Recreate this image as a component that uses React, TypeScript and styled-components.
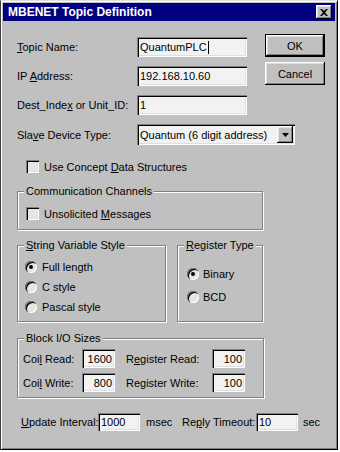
import React from "react";
import styled, { createGlobalStyle } from "styled-components";

const Global = createGlobalStyle`
  html, body { margin: 0; padding: 0; background: #ffffff; }
  body {
    font-family: "Liberation Sans", Arial, sans-serif;
    font-size: 11px;
    color: #000;
  }
  * { box-sizing: border-box; }
`;

const raised = `
  box-shadow: inset -1px -1px #000, inset 1px 1px #fff, inset -2px -2px #808080, inset 2px 2px #dfdfdf;
`;
const sunken = `
  box-shadow: inset 1px 1px #808080, inset 2px 2px #000, inset -1px -1px #fff, inset -2px -2px #dfdfdf;
`;

const Window = styled.div`
  width: 338px;
  height: 450px;
  background: #c0c0c0;
  border: 1px solid;
  border-color: #dfdfdf #000 #000 #404040;
  box-shadow: inset 1px 1px #fff, inset -1px -1px #808080;
  padding: 2px;
  display: flex;
  flex-direction: column;
`;

const TitleBar = styled.div`
  height: 18px;
  background: #000080;
  display: flex;
  align-items: center;
  justify-content: space-between;
  padding: 0 3px 0 5px;
`;

const Title = styled.span`
  font-weight: bold;
  font-size: 12px;
  color: #fff;
`;

const CloseBtn = styled.div`
  width: 16px;
  height: 14px;
  background: #c0c0c0;
  ${raised}
  display: flex;
  align-items: center;
  justify-content: center;
`;

const Body = styled.div`
  padding: 16px 0 0 14px;
  display: flex;
  flex-direction: column;
`;

const FormGrid = styled.div`
  display: grid;
  grid-template-columns: 120px 128px 60px;
  grid-template-rows: 20px 20px 20px 21px;
  row-gap: 9px;
`;

const Label = styled.div`
  align-self: center;
  line-height: 14px;
  white-space: nowrap;
`;

const Field = styled.div<{ $w: number; $h?: number; $right?: boolean }>`
  width: ${(p) => p.$w}px;
  height: ${(p) => p.$h ?? 20}px;
  background: #f2f2f2;
  ${sunken}
  display: flex;
  align-items: center;
  justify-content: ${(p) => (p.$right ? "flex-end" : "flex-start")};
  padding: 0 3px;
  white-space: nowrap;
  flex: none;
`;

const Caret = styled.span`
  display: inline-block;
  width: 1px;
  height: 13px;
  background: #000;
  margin-left: 1px;
`;

const Button = styled.div<{ $default?: boolean }>`
  width: 60px;
  height: 23px;
  align-self: end;
  background: #c0c0c0;
  display: flex;
  align-items: center;
  justify-content: center;
  box-shadow: inset -1px -1px #000, inset 1px 1px #fff, inset -2px -2px #808080, inset 2px 2px #dfdfdf;
  ${(p) => (p.$default ? `border: 1px solid #000;` : `margin-bottom: 1px;`)}
`;

const Combo = styled.div`
  grid-column: 2 / span 2;
  width: 158px;
  height: 21px;
  background: #f2f2f2;
  ${sunken}
  display: flex;
  align-items: center;
  justify-content: space-between;
  padding: 2px 2px 2px 3px;
  white-space: nowrap;
`;

const DropBtn = styled.div`
  width: 16px;
  height: 17px;
  background: #c0c0c0;
  ${raised}
  display: flex;
  align-items: center;
  justify-content: center;
`;

const CheckRow = styled.div<{ $mt?: number; $ml?: number }>`
  display: flex;
  align-items: center;
  gap: 5px;
  margin-top: ${(p) => p.$mt ?? 0}px;
  margin-left: ${(p) => p.$ml ?? 0}px;
  white-space: nowrap;
`;

const Check = styled.span`
  width: 13px;
  height: 13px;
  background: #e6e6e6;
  ${sunken}
  flex: none;
`;

const Group = styled.div<{ $w: number; $h: number; $mt?: number }>`
  position: relative;
  width: ${(p) => p.$w}px;
  height: ${(p) => p.$h}px;
  margin-top: ${(p) => p.$mt ?? 0}px;
  border: 1px solid #808080;
  box-shadow: inset 1px 1px #fff, 1px 1px #fff;
  flex: none;
`;

const Legend = styled.span`
  position: absolute;
  top: -8px;
  left: 6px;
  background: #c0c0c0;
  padding: 0 2px;
  line-height: 14px;
  white-space: nowrap;
`;

const GroupBody = styled.div<{ $pt: number; $pl: number; $row: number }>`
  display: grid;
  grid-auto-rows: ${(p) => p.$row}px;
  padding: ${(p) => p.$pt}px 0 0 ${(p) => p.$pl}px;
`;

const RadioRow = styled.div<{ $gap: number }>`
  display: flex;
  align-items: center;
  gap: ${(p) => p.$gap}px;
  white-space: nowrap;
`;

const Radio = styled.span<{ $on?: boolean }>`
  width: 12px;
  height: 12px;
  border-radius: 50%;
  background: #e6e6e6;
  box-shadow: inset 1px 1px #808080, inset 2px 2px #000, inset -1px -1px #fff, inset -2px -2px #dfdfdf;
  flex: none;
  display: flex;
  align-items: center;
  justify-content: center;
  &::after {
    content: "";
    width: 4px;
    height: 4px;
    border-radius: 50%;
    background: ${(p) => (p.$on ? "#000" : "transparent")};
  }
`;

const TwoGroups = styled.div`
  display: flex;
  gap: 11px;
  margin-top: 15px;
`;

const SizesGrid = styled.div`
  display: grid;
  grid-template-columns: 59px 33px 97px 33px;
  grid-template-rows: 19px 19px;
  row-gap: 5px;
  padding: 10px 0 0 5px;
`;

const SizeLabel = styled(Label)<{ $pl?: number }>`
  padding-left: ${(p) => p.$pl ?? 0}px;
`;

const BottomRow = styled.div`
  display: flex;
  align-items: center;
  height: 18px;
  margin-top: 15px;
  margin-left: 4px;
`;

const Fixed = styled.div<{ $w?: number; $pl?: number }>`
  ${(p) => (p.$w ? `width: ${p.$w}px;` : "")}
  padding-left: ${(p) => p.$pl ?? 0}px;
  white-space: nowrap;
  flex: none;
`;

export default function App() {
  return (
    <>
      <Global />
      <Window>
        <TitleBar>
          <Title>MBENET Topic Definition</Title>
          <CloseBtn>
            <svg width="8" height="7" viewBox="0 0 8 7">
              <path d="M0 0h2l2 2 2-2h2L5 3.5 8 7H6L4 5 2 7H0l3-3.5z" fill="#000" />
            </svg>
          </CloseBtn>
        </TitleBar>
        <Body>
          <FormGrid>
            <Label>
              <u>T</u>opic Name:
            </Label>
            <Field $w={110}>
              QuantumPLC
              <Caret />
            </Field>
            <Button $default>OK</Button>

            <Label>
              IP <u>A</u>ddress:
            </Label>
            <Field $w={110}>192.168.10.60</Field>
            <Button>Cancel</Button>

            <Label>
              Dest_Inde<u>x</u> or Unit_ID:
            </Label>
            <Field $w={110}>1</Field>
            <div />

            <Label>
              Sla<u>v</u>e Device Type:
            </Label>
            <Combo>
              <span>Quantum (6 digit address)</span>
              <DropBtn>
                <svg width="7" height="4" viewBox="0 0 7 4">
                  <path d="M0 0h7L3.5 4z" fill="#000" />
                </svg>
              </DropBtn>
            </Combo>
          </FormGrid>

          <CheckRow $mt={15} $ml={9}>
            <Check />
            <span>
              Use Concept <u>D</u>ata Structures
            </span>
          </CheckRow>

          <Group $w={246} $h={39} $mt={18}>
            <Legend>Communication Channels</Legend>
            <GroupBody $pt={14} $pl={8} $row={15}>
              <CheckRow>
                <Check />
                <span>
                  Unsolicited <u>M</u>essages
                </span>
              </CheckRow>
            </GroupBody>
          </Group>

          <TwoGroups>
            <Group $w={149} $h={77}>
              <Legend>
                <u>S</u>tring Variable Style
              </Legend>
              <GroupBody $pt={11} $pl={7} $row={20}>
                <RadioRow $gap={5}>
                  <Radio $on />
                  <span>Full length</span>
                </RadioRow>
                <RadioRow $gap={5}>
                  <Radio />
                  <span>C style</span>
                </RadioRow>
                <RadioRow $gap={5}>
                  <Radio />
                  <span>Pascal style</span>
                </RadioRow>
              </GroupBody>
            </Group>
            <Group $w={86} $h={77}>
              <Legend>
                <u>R</u>egister Type
              </Legend>
              <GroupBody $pt={16} $pl={9} $row={23}>
                <RadioRow $gap={4}>
                  <Radio $on />
                  <span>Binary</span>
                </RadioRow>
                <RadioRow $gap={4}>
                  <Radio />
                  <span>BCD</span>
                </RadioRow>
              </GroupBody>
            </Group>
          </TwoGroups>

          <Group $w={247} $h={60} $mt={16}>
            <Legend>Block I/O Sizes</Legend>
            <SizesGrid>
              <SizeLabel>
                Coi<u>l</u> Read:
              </SizeLabel>
              <Field $w={33} $h={19} $right>
                1600
              </Field>
              <SizeLabel $pl={11}>
                R<u>e</u>gister Read:
              </SizeLabel>
              <Field $w={33} $h={19} $right>
                100
              </Field>
              <SizeLabel>
                Coi<u>l</u> Write:
              </SizeLabel>
              <Field $w={33} $h={19} $right>
                800
              </Field>
              <SizeLabel $pl={11}>Register Write:</SizeLabel>
              <Field $w={33} $h={19} $right>
                100
              </Field>
            </SizesGrid>
          </Group>

          <BottomRow>
            <Fixed $w={77}>
              <u>U</u>pdate Interval:
            </Fixed>
            <Field $w={42} $h={18}>
              1000
            </Field>
            <Fixed $w={42} $pl={6}>
              msec
            </Fixed>
            <Fixed $w={74}>
              Re<u>p</u>ly Timeout:
            </Fixed>
            <Field $w={42} $h={18}>
              10
            </Field>
            <Fixed $pl={5}>sec</Fixed>
          </BottomRow>
        </Body>
      </Window>
    </>
  );
}
